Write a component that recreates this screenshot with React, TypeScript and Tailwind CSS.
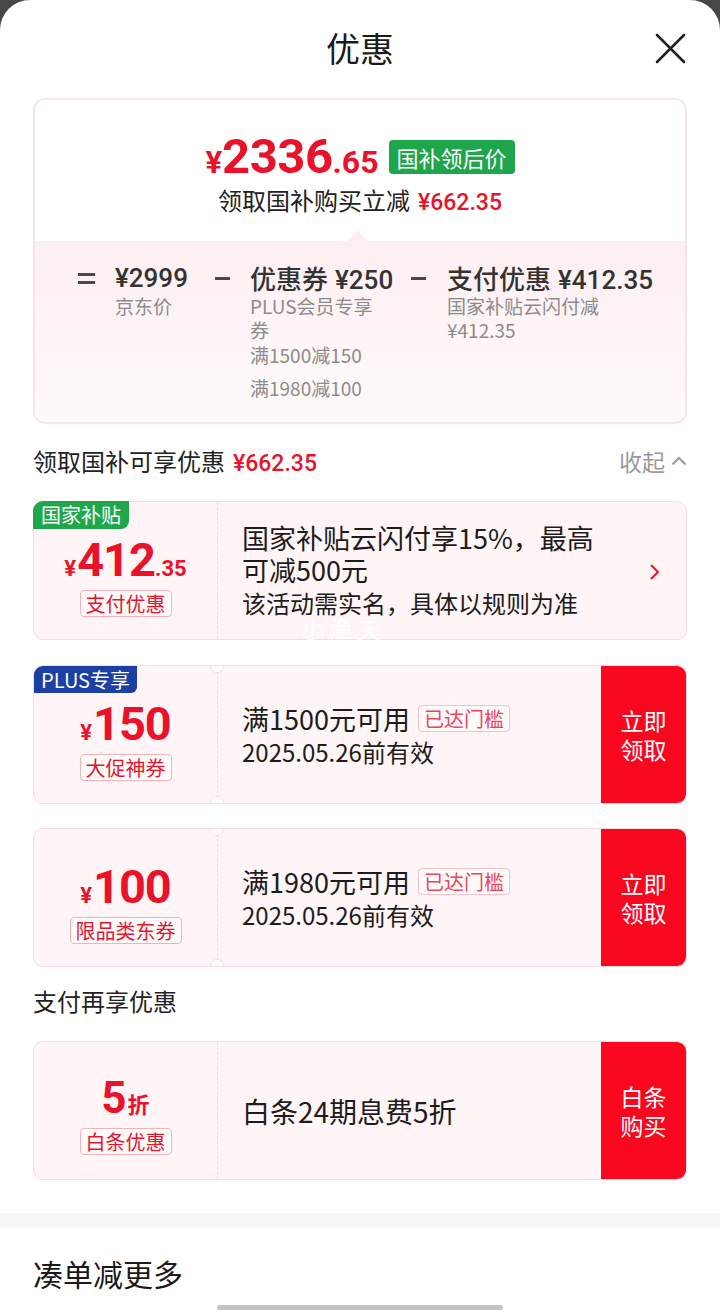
import React from "react";

const Price = ({ yen, main, dec }: { yen: string; main: string; dec?: string }) => (
  <div className="h-[48px] flex items-baseline leading-[48px] text-[#e8132b] font-['Roboto','Noto_Sans_CJK_SC',sans-serif] font-bold">
    <span className="text-[22px] mr-[1px]">{yen}</span>
    <span className="text-[47px] tracking-[-1px]">{main}</span>
    {dec && <span className="text-[22px]">{dec}</span>}
  </div>
);

const OutlineTag = ({ children }: { children: React.ReactNode }) => (
  <span className="mt-[6px] h-[27px] px-[5px] border border-[#f2b3bb] rounded-[4px] text-[20px] leading-[25px] text-[#e3162e] bg-[#fffafa] whitespace-nowrap">
    {children}
  </span>
);

const Reached = () => (
  <span className="ml-[8px] h-[27px] px-[5px] border border-[#f4c2c9] rounded-[4px] text-[20px] leading-[25px] text-[#e8475d] bg-[#fffafa] whitespace-nowrap">
    已达门槛
  </span>
);

const Notches = () => (
  <>
    <span className="absolute left-[176px] top-[-7px] w-[14px] h-[14px] rounded-full bg-white border border-[#f5dade]" />
    <span className="absolute left-[176px] bottom-[-7px] w-[14px] h-[14px] rounded-full bg-white border border-[#f5dade]" />
  </>
);

const Btn = ({ a, b }: { a: string; b: string }) => (
  <div className="w-[85px] shrink-0 bg-[#f8071f] text-white text-[23px] flex flex-col items-center justify-center">
    <span className="leading-[29px]">{a}</span>
    <span className="leading-[29px]">{b}</span>
  </div>
);

const Minus = () => (
  <div className="h-[32px] w-[15px] flex items-center">
    <span className="w-[15px] h-[3px] bg-[#4a4a4a]" />
  </div>
);

export default function App() {
  return (
    <div className="w-[720px] min-h-[1313px] bg-[#474747]">
      <div className="relative bg-white rounded-t-[30px] min-h-[1313px] overflow-hidden font-['Noto_Sans_CJK_SC',sans-serif] text-[#1c1c1c]">
        {/* header */}
        <div className="h-[96px] flex items-center">
          <div className="w-[80px]" />
          <div className="flex-1 text-center text-[34px] leading-none text-[#1a1a1a]">优惠</div>
          <div className="w-[80px] flex justify-end pr-[34px]">
            <svg width="31" height="31" viewBox="0 0 31 31">
              <path d="M2 2L29 29M29 2L2 29" stroke="#222" strokeWidth="2.6" strokeLinecap="round" />
            </svg>
          </div>
        </div>

        {/* summary card */}
        <div className="mx-[33px] mt-[2px] rounded-[12px] border-2 border-[#fbe4e8] overflow-hidden">
          <div className="bg-white pt-[32px] pb-[25px] flex flex-col items-center">
            <div className="flex items-center h-[50px]">
              <div className="h-[50px] flex items-baseline text-[#e8132b] font-['Roboto',sans-serif] font-bold leading-[50px]">
                <span className="text-[31px]">¥</span>
                <span className="text-[49px] tracking-[-0.5px]">2336</span>
                <span className="text-[32px]">.65</span>
              </div>
              <span className="ml-[10px] h-[34px] px-[8px] rounded-[4px] bg-[#1fa54b] text-white text-[22px] leading-[34px]">
                国补领后价
              </span>
            </div>
            <div className="mt-[2px] h-[32px] flex items-baseline leading-[32px] text-[24px] text-[#222]">
              <span>领取国补购买立减</span>
              <span className="ml-[8px] text-[#e8132b] font-['Roboto',sans-serif] font-medium text-[23px]">¥662.35</span>
            </div>
          </div>
          <div className="relative bg-linear-to-b from-[#fdeff1] to-[#fffafa] pt-[21px] pb-[22px] pl-[43px] flex items-start">
            <span className="absolute left-[315px] top-[-8px] w-[15px] h-[15px] rotate-45 bg-[#fdeff1]" />
            <div className="h-[32px] w-[17px] flex flex-col justify-center gap-[5px]">
              <span className="w-[17px] h-[3px] bg-[#4a4a4a]" />
              <span className="w-[17px] h-[3px] bg-[#4a4a4a]" />
            </div>
            <div className="ml-[20px] w-[80px]">
              <div className="h-[32px] leading-[32px] text-[26px] text-[#333] font-['Roboto',sans-serif] font-medium">¥2999</div>
              <div className="text-[19px] leading-[24px] text-[#8c8c8c]">京东价</div>
            </div>
            <div className="ml-[20px]">
              <Minus />
            </div>
            <div className="ml-[20px] w-[140px]">
              <div className="h-[32px] flex items-baseline leading-[32px] text-[26px] text-[#333] whitespace-nowrap font-medium">
                <span>优惠券</span>
                <span className="ml-[7px] font-['Roboto',sans-serif]">¥250</span>
              </div>
              <div className="text-[19px] leading-[24px] text-[#8c8c8c]">
                PLUS会员专享
                <br />券
              </div>
              <div className="mt-[1px] text-[19px] leading-[24px] text-[#8c8c8c]">满1500减150</div>
              <div className="mt-[9px] text-[19px] leading-[24px] text-[#8c8c8c]">满1980减100</div>
            </div>
            <div className="ml-[21px]">
              <Minus />
            </div>
            <div className="ml-[21px]">
              <div className="h-[32px] flex items-baseline leading-[32px] text-[26px] text-[#333] whitespace-nowrap font-medium">
                <span>支付优惠</span>
                <span className="ml-[7px] font-['Roboto',sans-serif]">¥412.35</span>
              </div>
              <div className="text-[19px] leading-[24px] text-[#8c8c8c]">
                国家补贴云闪付减
                <br />
                ¥412.35
              </div>
            </div>
          </div>
        </div>

        {/* section title */}
        <div className="mx-[33px] mt-[21px] h-[32px] flex items-center justify-between">
          <div className="flex items-baseline h-[32px] leading-[32px] text-[24px] text-[#222]">
            <span>领取国补可享优惠</span>
            <span className="ml-[8px] text-[#e8132b] font-['Roboto',sans-serif] font-medium text-[23px]">¥662.35</span>
          </div>
          <div className="flex items-center leading-[32px] text-[23px] text-[#9a9a9a]">
            收起
            <svg className="ml-[6px]" width="16" height="10" viewBox="0 0 16 10">
              <path d="M1.5 8.5L8 2L14.5 8.5" fill="none" stroke="#9a9a9a" strokeWidth="2" />
            </svg>
          </div>
        </div>

        {/* card 1 */}
        <div className="relative mx-[33px] mt-[24px] h-[139px] rounded-[10px] border border-[#f7dde1] bg-[#fff5f6] flex">
          <span className="absolute left-[-1px] top-[-1px] h-[28px] px-[8px] rounded-tl-[10px] rounded-br-[8px] bg-[#1fa84b] text-white text-[20px] leading-[28px]">
            国家补贴
          </span>
          <div className="w-[183px] shrink-0 flex flex-col items-center pt-[34px]">
            <Price yen="¥" main="412" dec=".35" />
            <OutlineTag>支付优惠</OutlineTag>
          </div>
          <div className="flex-1 flex items-center pl-[24px] border-l border-dashed border-[#f3dde0]">
            <div className="flex-1">
              <div className="text-[27px] leading-[32px] text-[#1c1c1c]">
                国家补贴云闪付享15%，最高
                <br />
                可减500元
              </div>
              <div className="mt-[1px] text-[24px] leading-[32px] text-[#1c1c1c]">该活动需实名，具体以规则为准</div>
            </div>
            <svg className="mr-[26px] mt-[2px]" width="11" height="18" viewBox="0 0 11 18">
              <path d="M2 2L9 9L2 16" fill="none" stroke="#e8132b" strokeWidth="2" />
            </svg>
          </div>
          <span className="absolute left-[267px] top-[112px] text-[24px] leading-[28px] text-white/90 tracking-[4px]">小渔夫</span>
        </div>

        {/* card 2 */}
        <div className="relative mx-[33px] mt-[25px] h-[139px] rounded-[10px] border border-[#f7dde1] bg-[#fff5f6] flex overflow-hidden">
          <span className="absolute left-0 top-0 h-[27px] px-[7px] rounded-br-[6px] bg-[#1c3fa4] text-white text-[20px] leading-[27px]">
            PLUS专享
          </span>
          <div className="w-[183px] shrink-0 flex flex-col items-center pt-[34px]">
            <Price yen="¥" main="150" />
            <OutlineTag>大促神券</OutlineTag>
          </div>
          <div className="flex-1 flex flex-col justify-center pl-[24px] border-l border-dashed border-[#f3dde0]">
            <div className="h-[34px] flex items-center text-[27px] leading-[34px]">
              <span>满1500元可用</span>
              <Reached />
            </div>
            <div className="text-[24px] leading-[32px]">2025.05.26前有效</div>
          </div>
          <Btn a="立即" b="领取" />
          <Notches />
        </div>

        {/* card 3 */}
        <div className="relative mx-[33px] mt-[24px] h-[139px] rounded-[10px] border border-[#f7dde1] bg-[#fff5f6] flex overflow-hidden">
          <div className="w-[183px] shrink-0 flex flex-col items-center pt-[34px]">
            <Price yen="¥" main="100" />
            <OutlineTag>限品类东券</OutlineTag>
          </div>
          <div className="flex-1 flex flex-col justify-center pl-[24px] border-l border-dashed border-[#f3dde0]">
            <div className="h-[34px] flex items-center text-[27px] leading-[34px]">
              <span>满1980元可用</span>
              <Reached />
            </div>
            <div className="text-[24px] leading-[32px]">2025.05.26前有效</div>
          </div>
          <Btn a="立即" b="领取" />
          <Notches />
        </div>

        {/* section 2 title */}
        <div className="mx-[33px] mt-[18px] h-[32px] text-[24px] leading-[32px] text-[#222]">支付再享优惠</div>

        {/* card 4 */}
        <div className="relative mx-[33px] mt-[24px] h-[139px] rounded-[10px] border border-[#f7dde1] bg-[#fff5f6] flex overflow-hidden">
          <div className="w-[183px] shrink-0 flex flex-col items-center pt-[32px]">
            <div className="h-[48px] flex items-baseline leading-[48px] text-[#e8132b] font-bold">
              <span className="text-[44px] font-['Roboto',sans-serif]">5</span>
              <span className="text-[22px] ml-[1px]">折</span>
            </div>
            <OutlineTag>白条优惠</OutlineTag>
          </div>
          <div className="flex-1 flex items-center pl-[24px] border-l border-dashed border-[#f3dde0]">
            <div className="text-[28px] leading-[36px]">白条24期息费5折</div>
          </div>
          <Btn a="白条" b="购买" />
        </div>

        {/* divider band */}
        <div className="mt-[33px] h-[15px] bg-[#f7f7f9]" />

        <div className="ml-[33px] mt-[25px] h-[40px] text-[30px] leading-[40px] text-[#1a1a1a]">凑单减更多</div>

        <div className="mx-auto mt-[12px] w-[286px] h-[5px] rounded-full bg-[#c4c4c4]" />
      </div>
    </div>
  );
}
